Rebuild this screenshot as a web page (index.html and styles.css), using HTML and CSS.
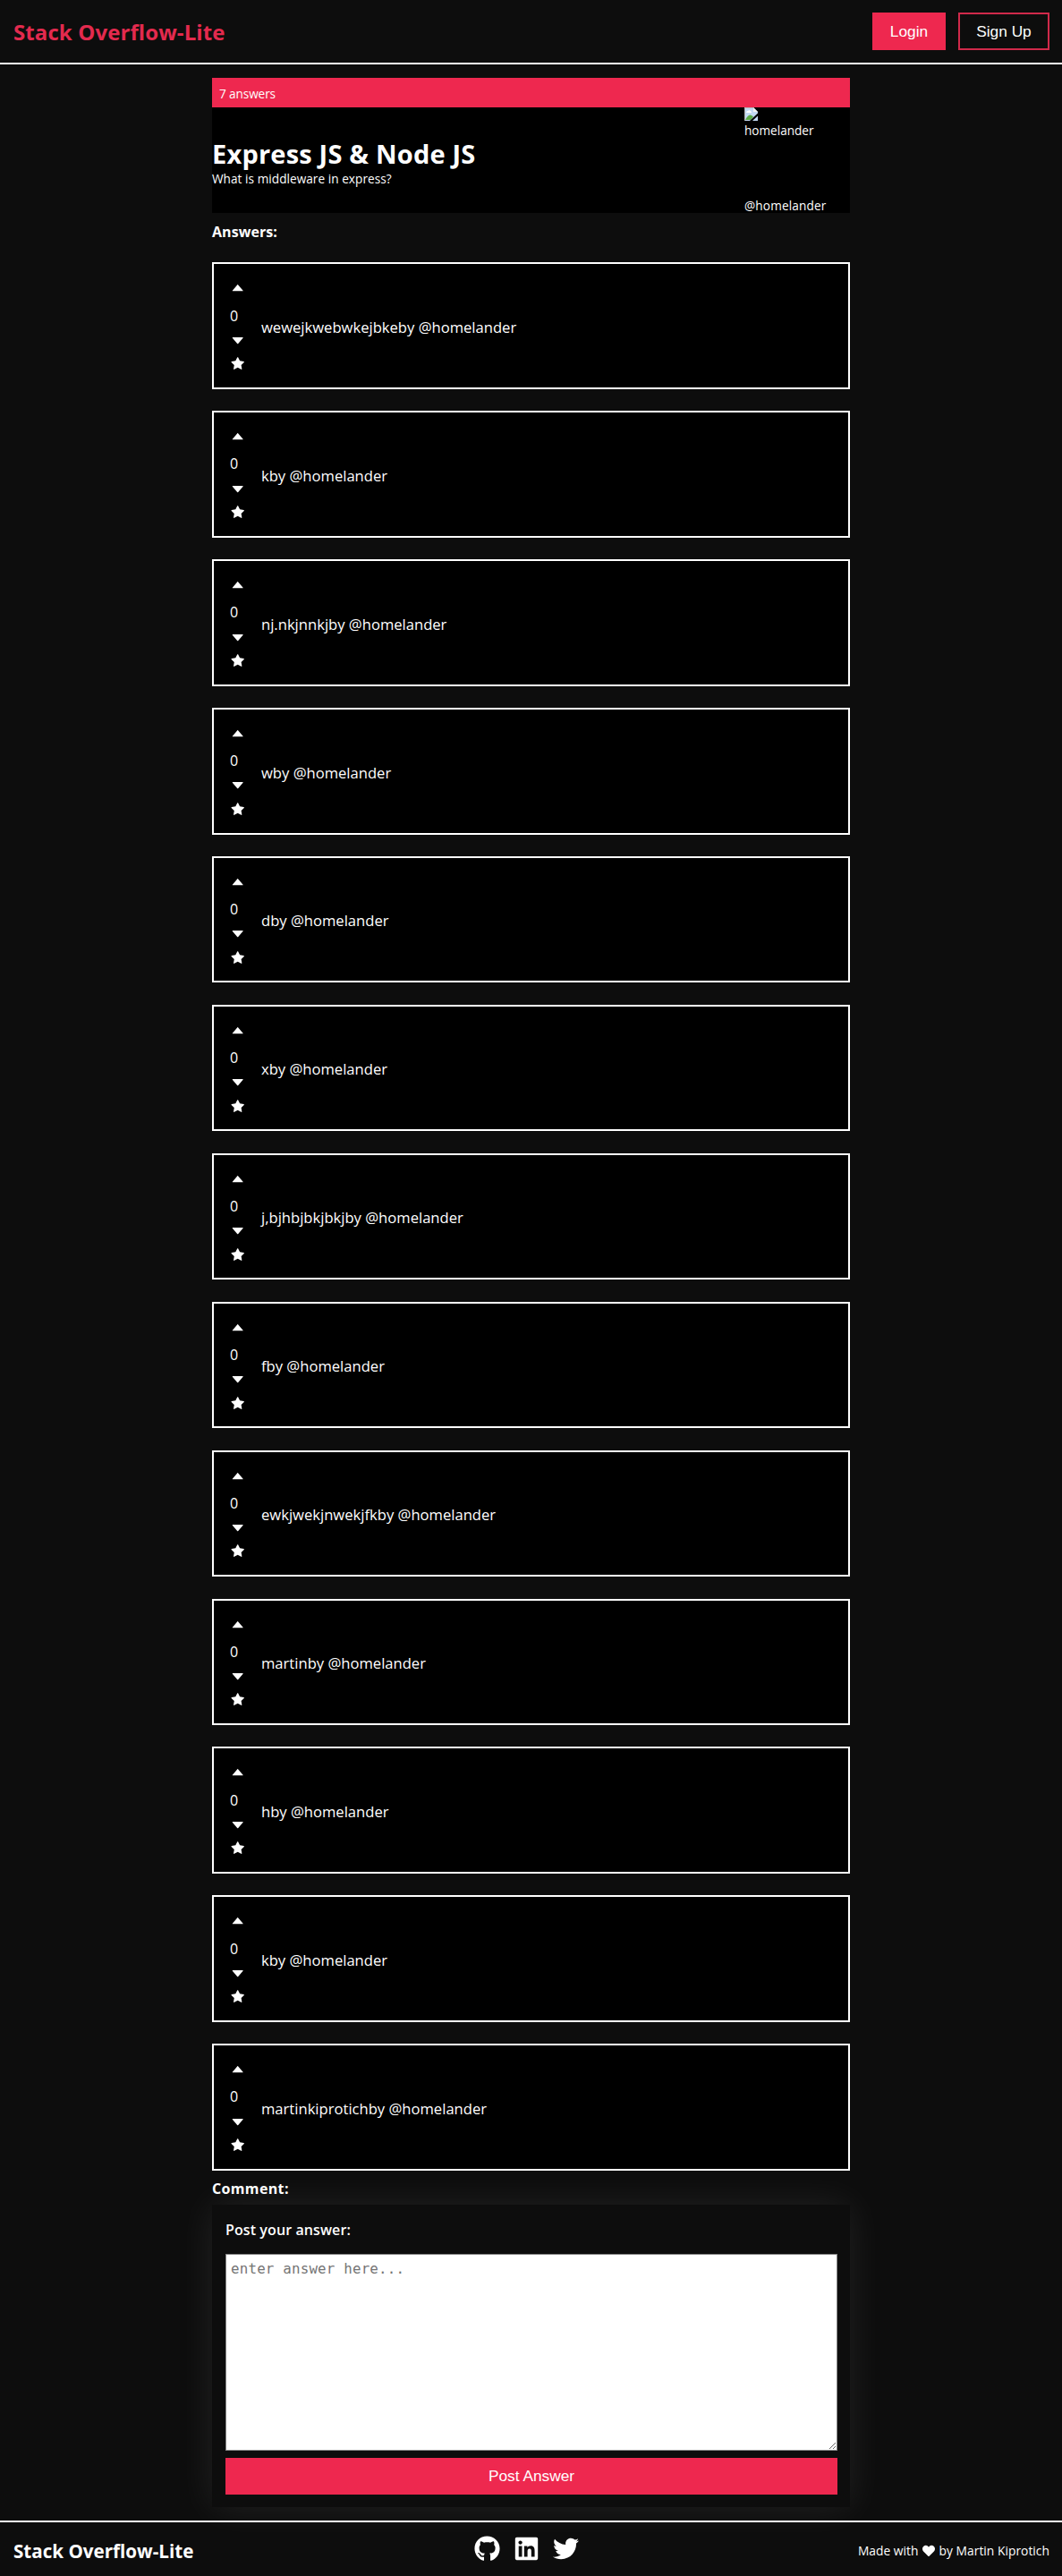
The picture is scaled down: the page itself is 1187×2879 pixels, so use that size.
FILE: index.html
```html
<!DOCTYPE html>
<html lang="en">
<head>
<meta charset="utf-8">
<title>Stack Overflow-Lite</title>
<link rel="stylesheet" href="styles.css">
</head>
<body>
<svg class="sprite" aria-hidden="true">
  <symbol id="up" viewBox="0 0 1024 1024"><path d="M858.9 689L530.5 308.2c-9.4-10.9-27.5-10.9-37 0L165.1 689c-12.2 14.2-1.2 35 18.5 35h656.8c19.7 0 30.7-20.8 18.5-35z"/></symbol>
  <symbol id="down" viewBox="0 0 1024 1024"><path d="M840.4 300H183.6c-19.7 0-30.7 20.8-18.5 35l328.4 380.8c9.4 10.9 27.5 10.9 37 0L858.9 335c12.2-14.2 1.2-35-18.5-35z"/></symbol>
  <symbol id="star" viewBox="0 0 1024 1024"><path d="M908.1 353.1l-253.9-36.9L540.7 86.1c-3.1-6.3-8.2-11.4-14.5-14.5-15.8-7.8-35-1.3-42.9 14.5L369.8 316.2l-253.9 36.9c-7 1-13.4 4.3-18.3 9.3a32.05 32.05 0 0 0 .6 45.3l183.7 179.1-43.4 252.9a31.95 31.95 0 0 0 46.4 33.7L512 754l227.1 119.4c6.2 3.3 13.4 4.4 20.3 3.2 17.4-3 29.1-19.5 26.1-36.9l-43.4-252.9 183.7-179.1c5-4.9 8.3-11.3 9.3-18.3 2.7-17.5-9.5-33.7-27-36.3z"/></symbol>
</svg>

<header class="header">
  <h2 class="logo">Stack Overflow-Lite</h2>
  <nav class="nav">
    <button class="btn btn-login">Login</button>
    <button class="btn btn-signup">Sign Up</button>
  </nav>
</header>

<main class="main">
  <div class="count">7 answers</div>
  <section class="question">
    <div class="question-text">
      <h1 class="title">Express JS &amp; Node JS</h1>
      <p class="body">What is middleware in express?</p>
    </div>
    <div class="author">
      <div class="avatar">
        <svg class="broken" viewBox="0 0 15 15"><path fill="#c3d9f3" d="M0 0h10l5 5v10H0z"/><path fill="#fff" d="M2 5.5c0-1.500 2-1.500 2-1.500 1-1.500 3-.5 3 .5 1.500 0 1.500 1.500 0 1.500H3c-.6 0-1-.2-1-.5z"/><path fill="#5aaa45" d="M1 14c2-4 4-5.500 5.500-5.500 1.500 0 2.500 1 3.500 2L7 14z"/><path fill="#f3f3f3" d="M10 0v5h5z"/><path fill="#000" d="M15 6.500v3L9 15H6z"/><path fill="none" stroke="#b5b5b5" d="M.5 15V.5H10"/></svg>
        <span>homelander</span>
      </div>
      <span class="handle">@homelander</span>
    </div>
  </section>

  <h4 class="heading">Answers:</h4>
  <div class="answers" id="answers"></div>

  <h4 class="heading heading-comment">Comment:</h4>
  <form class="form">
    <label class="label" for="answer">Post your answer:</label>
    <textarea class="input" id="answer" placeholder="enter answer here..."></textarea>
    <button class="btn btn-post" type="button">Post Answer</button>
  </form>
</main>

<footer class="footer">
  <h3 class="footer-logo">Stack Overflow-Lite</h3>
  <div class="social">
    <svg class="social-icon" viewBox="0 0 496 512"><path d="M165.900 397.400c0 2-2.300 3.600-5.200 3.600-3.300.3-5.600-1.300-5.600-3.600 0-2 2.300-3.600 5.200-3.600 3-.3 5.600 1.300 5.600 3.600zm-31.100-4.500c-.7 2 1.300 4.300 4.300 4.900 2.600 1 5.600 0 6.200-2s-1.300-4.300-4.300-5.200c-2.600-.7-5.500.3-6.200 2.300zm44.200-1.700c-2.900.7-4.900 2.600-4.600 4.900.3 2 2.900 3.300 5.900 2.600 2.900-.7 4.900-2.600 4.600-4.600-.3-1.900-3-3.200-5.900-2.900zM244.800 8C106.100 8 0 113.300 0 252c0 110.900 69.800 205.800 169.500 239.200 12.800 2.300 17.300-5.600 17.300-12.100 0-6.200-.3-40.400-.3-61.400 0 0-70 15-84.700-29.800 0 0-11.400-29.100-27.800-36.600 0 0-22.900-15.700 1.600-15.400 0 0 24.900 2 38.600 25.800 21.900 38.600 58.600 27.500 72.900 20.900 2.300-16 8.800-27.100 16-33.700-55.900-6.200-112.300-14.300-112.300-110.500 0-27.500 7.600-41.300 23.600-58.900-2.600-6.500-11.100-33.300 2.600-67.900 20.900-6.500 69 27 69 27 20-5.600 41.500-8.500 62.800-8.500s42.800 2.900 62.800 8.500c0 0 48.100-33.600 69-27 13.700 34.700 5.200 61.400 2.600 67.900 16 17.700 25.800 31.500 25.800 58.900 0 96.500-58.900 104.200-114.800 110.500 9.200 7.900 17 22.900 17 46.400 0 33.700-.3 75.400-.3 83.600 0 6.500 4.600 14.400 17.300 12.100C428.200 457.800 496 362.900 496 252 496 113.300 383.500 8 244.800 8z"/></svg>
    <svg class="social-icon" viewBox="0 0 448 512"><path d="M416 32H31.900C14.300 32 0 46.500 0 64.300v383.400C0 465.500 14.300 480 31.900 480H416c17.600 0 32-14.500 32-32.300V64.300c0-17.800-14.400-32.300-32-32.300zM135.400 416H69V202.200h66.500V416zm-33.200-243c-21.300 0-38.500-17.300-38.500-38.500S80.900 96 102.200 96c21.200 0 38.500 17.300 38.500 38.500 0 21.300-17.200 38.500-38.500 38.500zm282.100 243h-66.400V312c0-24.800-.5-56.700-34.500-56.700-34.600 0-39.900 27-39.900 54.900V416h-66.400V202.200h63.700v29.200h.9c8.900-16.800 30.600-34.500 62.900-34.500 67.200 0 79.700 44.300 79.700 101.900V416z"/></svg>
    <svg class="social-icon" viewBox="0 0 512 512"><path d="M459.370 151.716c.325 4.548.325 9.097.325 13.645 0 138.720-105.583 298.558-298.558 298.558-59.452 0-114.680-17.219-161.137-47.106 8.447.974 16.568 1.299 25.340 1.299 49.055 0 94.213-16.568 130.274-44.832-46.132-.975-84.792-31.188-98.112-72.772 6.498.974 12.995 1.624 19.818 1.624 9.421 0 18.843-1.300 27.614-3.573-48.081-9.747-84.143-51.980-84.143-102.985v-1.299c13.969 7.797 30.214 12.670 47.431 13.319-28.264-18.843-46.781-51.005-46.781-87.391 0-19.492 5.197-37.360 14.294-52.954 51.655 63.675 129.300 105.258 216.365 109.807-1.624-7.797-2.599-15.918-2.599-24.040 0-57.828 46.782-104.934 104.934-104.934 30.213 0 57.502 12.670 76.670 33.137 23.715-4.548 46.456-13.320 66.599-25.340-7.798 24.366-24.366 44.833-46.132 57.827 21.117-2.273 41.584-8.122 60.426-16.243-14.292 20.791-32.161 39.308-52.628 54.253z"/></svg>
  </div>
  <p class="credit"><span>Made with</span><svg class="heart" viewBox="0 0 512 512"><path d="M462.300 62.600C407.500 15.900 326 24.300 275.700 76.200L256 96.500l-19.700-20.300C186.100 24.300 104.500 15.900 49.700 62.600c-62.800 53.600-66.100 149.800-9.900 207.900l193.500 199.800c12.500 12.900 32.800 12.900 45.300 0l193.500-199.800c56.300-58.100 53-154.300-9.800-207.900z"/></svg><span>by Martin Kiprotich</span></p>
</footer>
<script src="answers.js"></script>
</body>
</html>
```
FILE: answers.js
```js
const answers = [
  "wewejkwebwkejbkeby", "kby", "nj.nkjnnkjby", "wby", "dby", "xby",
  "j,bjhbjbkjbkjby", "fby", "ewkjwekjnwekjfkby", "martinby", "hby", "kby",
  "martinkiprotichby"
];

const icon = (name) => `<svg class="vote-icon"><use href="#${name}"/></svg>`;

document.getElementById("answers").innerHTML = answers.map((text) => `
  <article class="answer">
    <div class="votes">${icon("up")}<span class="score">0</span>${icon("down")}${icon("star")}</div>
    <p class="answer-text">${text} @homelander</p>
  </article>`).join("");
```
FILE: styles.css
```css
* { box-sizing: border-box; margin: 0; padding: 0; }

body {
  background: #0d0d0d;
  color: #fff;
  font-family: "Open Sans", "Noto Sans", sans-serif;
  font-size: 13.6px;
}

.sprite { display: none; }
svg { fill: #fff; flex: none; }

.header {
  display: flex;
  align-items: center;
  justify-content: space-between;
  height: 72px;
  padding: 0 14px 0 15px;
  border-bottom: 2px solid #fff;
}
.logo {
  color: #e32a4e;
  font-size: 24px;
  line-height: 32px;
  letter-spacing: 0.1px;
  padding-top: 2px;
}
.nav { display: flex; gap: 14px; }

.btn {
  height: 42px;
  border: 2px solid #ee284f;
  background: #ee284f;
  color: #fff;
  font-family: "Liberation Sans", Arial, sans-serif;
  font-size: 17.3px;
}
.btn-login { width: 82px; }
.btn-signup { width: 102px; background: transparent; border-color: #d0294a; }

.main { width: 713px; margin: 15px auto 0; }

.count {
  height: 33px;
  padding-left: 8px;
  background: #ee284f;
  line-height: 35px;
  letter-spacing: -0.1px;
}
.question {
  display: flex;
  justify-content: space-between;
  height: 118px;
  background: #000;
}
.question-text { padding-top: 34px; }
.title {
  font-size: 29px;
  line-height: 36px;
  letter-spacing: 0.2px;
}
.body { line-height: 20px; letter-spacing: 0.05px; }
.author {
  display: flex;
  flex-direction: column;
  justify-content: space-between;
  width: 118px;
}
.avatar { display: flex; flex-direction: column; line-height: 20px; }
.broken { width: 15px; height: 15px; margin-bottom: 1px; }
.handle { line-height: 17px; letter-spacing: 0.15px; }

.heading {
  padding-top: 9px;
  font-size: 16px;
  line-height: 24px;
  letter-spacing: 0.05px;
}
.heading-comment { padding-top: 8px; height: 38px; letter-spacing: 0.35px; }

.answers {
  display: grid;
  gap: 24.52px;
  padding-top: 22.4px;
}
.answer {
  display: flex;
  align-items: center;
  height: 141.4px;
  padding-left: 18px;
  border: 2px solid #fff;
  background: #000;
}
.votes { width: 35px; display: flex; flex-direction: column; align-self: flex-start; padding-top: 18px; }
.vote-icon { width: 17.4px; height: 17.4px; }
.score { margin: 9.8px 0 7.2px; font-size: 16px; line-height: 24px; }
.vote-icon:last-child { margin-top: 9px; }
.answer-text { padding-top: 3.5px; font-size: 16.6px; line-height: 24px; }

.form {
  display: flex;
  flex-direction: column;
  height: 338px;
  padding: 15px 14px 14px 15px;
  background: #0d0d0d;
  box-shadow: 0 0 40px rgba(255, 255, 255, 0.09);
}
.label {
  height: 40px;
  padding-top: 1px;
  font-size: 16px;
  font-weight: 600;
  line-height: 25px;
  letter-spacing: 0.1px;
}
.input {
  height: 220.5px;
  margin-bottom: 7.500px;
  padding: 4px 5px;
  border: 1px solid #858585;
  background: #fff;
  font: 15.8px/24px "DejaVu Sans Mono", monospace;
  letter-spacing: 0.2px;
}
.input::placeholder { color: #757575; }
.btn-post { height: 41px; }

.footer {
  display: grid;
  grid-template-columns: 1fr auto 1fr;
  align-items: center;
  height: 62px;
  margin-top: 15px;
  padding: 0 14px 0 15px;
  border-top: 2px solid #fff;
}
.footer-logo { font-size: 20.6px; line-height: 28px; padding-top: 4px; }
.social { display: flex; gap: 15px; padding-right: 12px; }
.social-icon { width: 29px; height: 29px; }
.credit {
  display: flex;
  justify-content: flex-end;
  align-items: center;
  gap: 4.5px;
  padding-top: 4px;
  font-size: 13.8px;
  line-height: 20px;
  letter-spacing: 0.03px;
}
.heart { width: 14px; height: 14px; }
```
